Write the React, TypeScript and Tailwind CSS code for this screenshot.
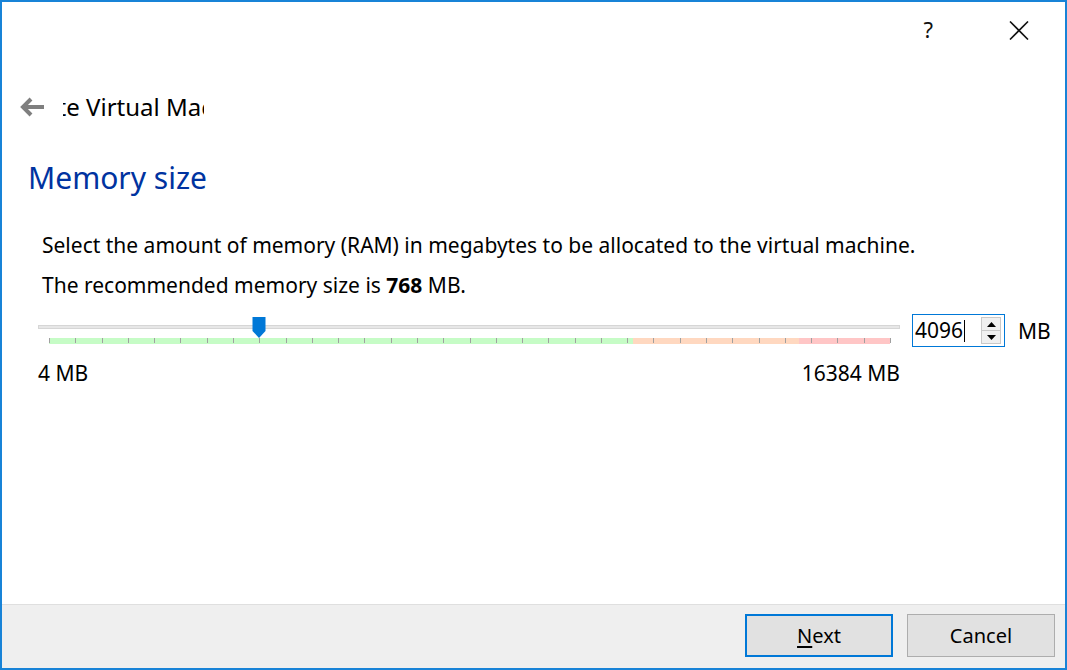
import React from 'react';

const font = { fontFamily: '"Noto Sans", "Open Sans", sans-serif' };

const ticks = Array.from({ length: 33 }, (_, i) => i);

const MemorySlider: React.FC = () => {
  return (
    <div className="relative w-[862px] h-[30px]">
      {/* groove */}
      <div className="absolute left-0 right-0 top-[8px] h-[4px] bg-[#e7e7e7] border border-[#d6d6d6]" />
      {/* colored ranges */}
      <div className="absolute left-[11px] w-[841px] top-[21px] h-[6px] flex">
        <div className="h-full w-[584px] bg-[#c6fcc6]" />
        <div className="h-full w-[166px] bg-[#ffd8c0]" />
        <div className="h-full flex-1 bg-[#ffc6c6]" />
      </div>
      {ticks.map((i) => (
        <div
          key={i}
          className="absolute top-[21px] h-[5px] w-px bg-[#a0a0a0]"
          style={{ left: 11 + Math.round((841 * i) / 32) }}
        />
      ))}
      {/* handle */}
      <svg className="absolute left-[214px] top-0" width="14" height="22" viewBox="0 0 14 22">
        <path d="M0.5 0 H13.5 V14 L7 21 L0.5 14 Z" fill="#0078d7" />
      </svg>
    </div>
  );
};

const SpinBox: React.FC = () => (
  <div className="w-[93px] h-[33px] border border-[#0078d7] bg-white flex items-center pl-[2px] pr-[3px]">
    <span className="text-[21px] leading-none text-black flex-1 flex items-center">
      4096<span className="inline-block w-px h-[22px] bg-black ml-[1px]" />
    </span>
    <div className="w-[20px] h-[27px] flex flex-col border border-[#c9c9c9] bg-[#f0f0f0]">
      <div className="flex-1 flex items-center justify-center border-b border-[#c9c9c9]">
        <svg width="9" height="5" viewBox="0 0 9 5"><path d="M4.5 0 L9 5 H0 Z" fill="#000" /></svg>
      </div>
      <div className="flex-1 flex items-center justify-center">
        <svg width="9" height="5" viewBox="0 0 9 5"><path d="M0 0 H9 L4.5 5 Z" fill="#000" /></svg>
      </div>
    </div>
  </div>
);

export default function App() {
  return (
    <div
      className="w-[1067px] h-[670px] border-2 border-[#1883d7] bg-white flex flex-col text-black overflow-hidden"
      style={font}
    >
      {/* title bar */}
      <div className="h-[56px] flex justify-end items-start pt-[14px] pr-[36px] gap-[76px]">
        <span className="text-[22px] leading-[26px] text-[#111]">?</span>
        <svg className="mt-[5px]" width="20" height="19" viewBox="0 0 20 19">
          <path d="M1 0.5 L19 18.5 M19 0.5 L1 18.5" stroke="#111" strokeWidth="1.6" />
        </svg>
      </div>

      {/* back + wizard name */}
      <div className="h-[70px] flex items-start pt-[33px] pl-[18px]">
        <svg width="26" height="20" viewBox="0 0 26 20" className="mt-[6px]">
          <path d="M11 2 L3 10 L11 18 M3 10 H24" stroke="#7f7f7f" strokeWidth="4" fill="none" strokeLinejoin="miter" />
        </svg>
        <div className="ml-[17px] w-[141px] overflow-hidden whitespace-nowrap">
          <span className="block text-[24px] leading-[32px] ml-[-57px]">Create Virtual Machine</span>
        </div>
      </div>

      {/* page title */}
      <div className="pl-[26px] pt-[26px] h-[74px]">
        <h1 className="text-[30px] leading-[48px] text-[#0033a0]">Memory size</h1>
      </div>

      {/* body */}
      <div className="pl-[40px] pt-[29px] text-[21px] leading-[28px]">
        <p className="h-[40px]">Select the amount of memory (RAM) in megabytes to be allocated to the virtual machine.</p>
        <p>
          The recommended memory size is <b>768</b> MB.
        </p>
      </div>

      <div className="flex items-start pl-[36px] mt-[18px]">
        <div className="flex flex-col">
          <MemorySlider />
          <div className="flex justify-between text-[21px] leading-[28px] mt-[12px]">
            <span>4 MB</span>
            <span>16384 MB</span>
          </div>
        </div>
        <div className="ml-[12px] mt-[-3px]">
          <SpinBox />
        </div>
        <span className="ml-[13px] mt-[0px] text-[21px] leading-[28px]">MB</span>
      </div>

      <div className="flex-1" />

      {/* footer */}
      <div className="h-[64px] border-t border-[#dfdfdf] bg-[#efefef] flex justify-end items-start pt-[9px] pr-[10px] gap-[14px]">
        <button className="w-[148px] h-[43px] border-2 border-[#0078d7] bg-[#e1e1e1] text-[20px]">
          <span className="underline underline-offset-[3px]">N</span>ext
        </button>
        <button className="w-[148px] h-[43px] border border-[#adadad] bg-[#e1e1e1] text-[20px]">Cancel</button>
      </div>
    </div>
  );
}
